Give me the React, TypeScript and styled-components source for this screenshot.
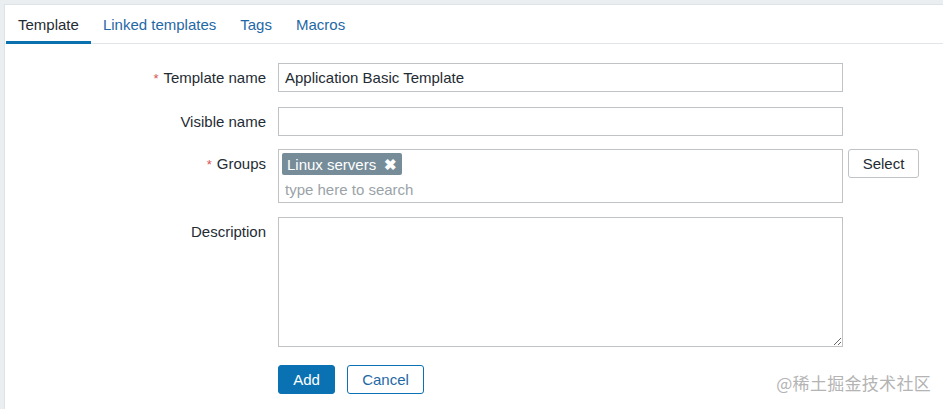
import React from "react";
import styled, { createGlobalStyle } from "styled-components";

const Global = createGlobalStyle`
  html, body { margin: 0; padding: 0; background: #ebeef0; height: 100%; }
  #root { height: 100%; }
  * { box-sizing: border-box; }
  body { font-family: Arial, "Liberation Sans", sans-serif; color: #1f2c33; }
`;

const Page = styled.div`
  min-height: 100vh;
  padding: 4px 0 0 4px;
  display: flex;
  flex-direction: column;
`;

const Panel = styled.div`
  position: relative;
  flex: 1;
  background: #fff;
  border-top: 1px solid #dde3e6;
  border-left: 1px solid #dde3e6;
`;

const TabBar = styled.div`
  display: flex;
  height: 39px;
  padding-left: 1px;
  border-bottom: 1px solid #e3e6e8;
`;

const Tab = styled.div<{ $active?: boolean }>`
  display: flex;
  align-items: center;
  padding: 3px 12px 0;
  font-size: 15px;
  color: ${(p) => (p.$active ? "#1f2c33" : "#1f68a6")};
  border-bottom: 3px solid ${(p) => (p.$active ? "#0a70ae" : "transparent")};
  margin-bottom: -1px;
  cursor: pointer;
`;

const Form = styled.div`
  display: grid;
  grid-template-columns: 261px 565px 71px;
  column-gap: 12px;
  row-gap: 13.5px;
  padding-top: 19px;
  & > :nth-child(3n + 3) { margin-left: -7px; }
`;

const Label = styled.div`
  text-align: right;
  font-size: 15px;
  line-height: 29px;
  color: #1f2c33;
  align-self: start;
`;

const Req = styled.span`
  color: #d9534f;
  font-size: 13px;
  margin-right: 5px;
`;

const TextInput = styled.input`
  display: block;
  height: 29px;
  width: 100%;
  border: 1px solid #bfc3c5;
  padding: 0 6px;
  font-family: Arial, "Liberation Sans", sans-serif;
  font-size: 15px;
  color: #1f2c33;
  outline: none;
  border-radius: 0;
`;

const MultiBox = styled.div`
  height: 54px;
  border: 1px solid #bfc3c5;
  display: flex;
  flex-direction: column;
`;

const TagRow = styled.div`
  display: flex;
  padding: 3px 3px 0;
`;

const Chip = styled.span`
  display: inline-flex;
  align-items: center;
  height: 22px;
  padding: 0 5px 0 5px;
  background: #768d99;
  color: #fff;
  font-size: 15px;
  border-radius: 2px;
  gap: 8px;
`;

const ChipX = styled.span`
  font-size: 15px;
  font-weight: bold;
  line-height: 1;
`;

const Search = styled.input`
  margin-top: 2px;
  height: 25px;
  border: none;
  padding: 0 6px;
  font-family: Arial, "Liberation Sans", sans-serif;
  font-size: 15px;
  outline: none;
  &::placeholder { color: #9aa3a8; }
`;

const Btn = styled.button<{ $variant: "primary" | "outline" | "plain" }>`
  height: 29px;
  padding: 0 14px;
  border-radius: 3px;
  font-family: Arial, "Liberation Sans", sans-serif;
  font-size: 15px;
  cursor: pointer;
  ${(p) =>
    p.$variant === "primary"
      ? "background:#0a72b3;border:1px solid #0a72b3;color:#fff;"
      : p.$variant === "outline"
      ? "background:#fff;border:1px solid #0a72b3;color:#1f68a6;"
      : "background:#fff;border:1px solid #bfc3c5;color:#1f2c33;"}
`;

const SelectBtn = styled(Btn)`
  width: 71px;
  padding: 0;
  align-self: start;
`;

const AddBtn = styled(Btn)`
  width: 57px;
  padding: 0;
`;

const CancelBtn = styled(Btn)`
  width: 77px;
  padding: 0;
`;

const TextArea = styled.textarea`
  height: 130px;
  width: 100%;
  border: 1px solid #bfc3c5;
  padding: 6px;
  font-family: Arial, "Liberation Sans", sans-serif;
  font-size: 15px;
  outline: none;
  resize: both;
  display: block;
`;

const Actions = styled.div`
  display: flex;
  gap: 12px;
  margin-top: 4.5px;
`;

const Spacer = styled.div``;

const Watermark = styled.div`
  position: absolute;
  right: 12px;
  bottom: 14px;
  font-family: "Noto Sans CJK SC", Arial, sans-serif;
  font-size: 17px;
  color: #b4b4b4;
  letter-spacing: 0.3px;
  pointer-events: none;
`;

export default function App() {
  return (
    <>
      <Global />
      <Page>
        <Panel>
          <TabBar>
            <Tab $active>Template</Tab>
            <Tab>Linked templates</Tab>
            <Tab>Tags</Tab>
            <Tab>Macros</Tab>
          </TabBar>
          <Form>
            <Label><Req>*</Req>Template name</Label>
            <TextInput defaultValue="Application Basic Template" />
            <Spacer />

            <Label>Visible name</Label>
            <TextInput />
            <Spacer />

            <Label><Req>*</Req>Groups</Label>
            <MultiBox>
              <TagRow>
                <Chip>Linux servers<ChipX>✖</ChipX></Chip>
              </TagRow>
              <Search placeholder="type here to search" />
            </MultiBox>
            <SelectBtn $variant="plain">Select</SelectBtn>

            <Label>Description</Label>
            <TextArea />
            <Spacer />

            <Spacer />
            <Actions>
              <AddBtn $variant="primary">Add</AddBtn>
              <CancelBtn $variant="outline">Cancel</CancelBtn>
            </Actions>
            <Spacer />
          </Form>
          <Watermark>@稀土掘金技术社区</Watermark>
        </Panel>
      </Page>
    </>
  );
}
